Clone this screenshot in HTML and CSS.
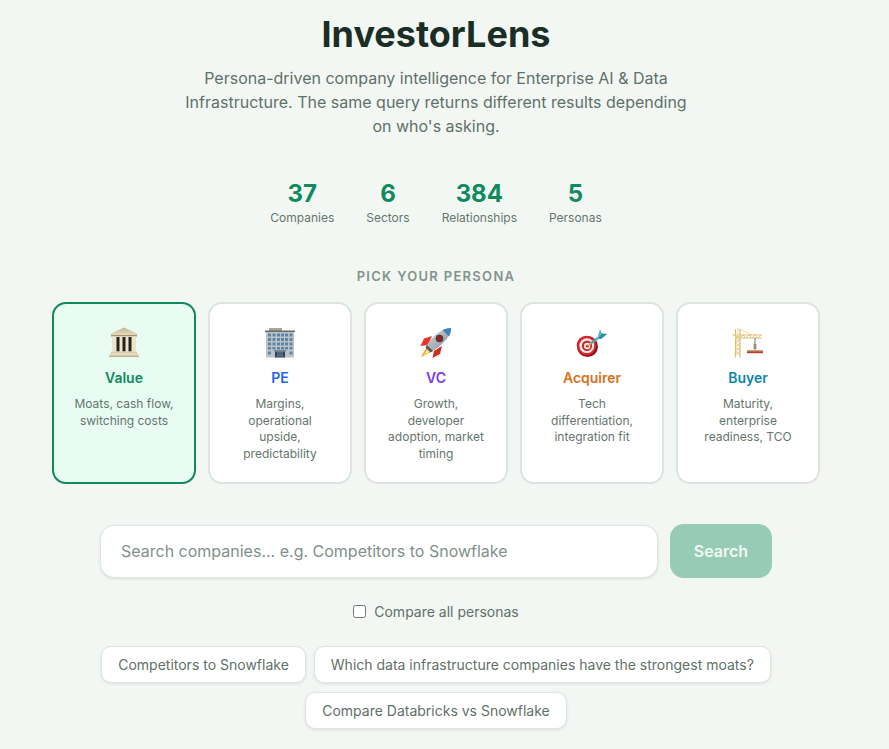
FILE: index.html
```html
<!DOCTYPE html>
<html lang="en">
<head>
  <meta charset="UTF-8">
  <title>InvestorLens</title>
  <link rel="stylesheet" href="styles.css">
</head>
<body>

<div class="page">
  <h1 class="title">InvestorLens</h1>
  <p class="tagline">Persona-driven company intelligence for Enterprise AI &amp; Data Infrastructure. The same query returns different results depending on who's asking.</p>

  <div class="stats">
    <div class="stat"><div class="stat-num">37</div><div class="stat-label">Companies</div></div>
    <div class="stat"><div class="stat-num">6</div><div class="stat-label">Sectors</div></div>
    <div class="stat"><div class="stat-num">384</div><div class="stat-label">Relationships</div></div>
    <div class="stat"><div class="stat-num">5</div><div class="stat-label">Personas</div></div>
  </div>

  <div class="pick-label">PICK YOUR PERSONA</div>

  <div class="personas">
    <div class="persona selected">
      <svg class="persona-icon" viewBox="0 0 32 32">
        <defs>
          <linearGradient id="stone" x1="0" y1="0" x2="0" y2="1">
            <stop offset="0" stop-color="#c4b48e"/>
            <stop offset="1" stop-color="#e6dcc0"/>
          </linearGradient>
        </defs>
        <path d="M16 0.5 L29 6.5 L29 8 L3 8 L3 6.5 Z" fill="url(#stone)"/>
        <rect x="3" y="8" width="26" height="1.5" fill="#a39470"/>
        <rect x="4" y="9.5" width="24" height="15" fill="#ece4cd"/>
        <rect x="8.5" y="10" width="3" height="14.5" fill="#26221d"/>
        <rect x="14.5" y="10" width="3" height="14.5" fill="#26221d"/>
        <rect x="20.5" y="10" width="3" height="14.5" fill="#26221d"/>
        <rect x="3" y="24.5" width="26" height="2" fill="#d8cba8"/>
        <rect x="2" y="26.5" width="28" height="2" fill="#e4d9bb"/>
        <rect x="1" y="28.5" width="30" height="1.5" fill="#bfae86"/>
      </svg>
      <div class="persona-name value">Value</div>
      <div class="persona-desc">Moats, cash flow, switching costs</div>
    </div>

    <div class="persona">
      <svg class="persona-icon" viewBox="0 0 32 32">
        <rect x="5" y="1" width="13" height="3" fill="#aaa49c"/>
        <rect x="1" y="3.5" width="30" height="1.5" fill="#6f675e"/>
        <rect x="2" y="5" width="28" height="25.5" fill="#bcc4c8"/>
        <g fill="#5d86a6">
          <rect x="4" y="6.5" width="3" height="3"/><rect x="8.5" y="6.5" width="3" height="3"/><rect x="13" y="6.5" width="3" height="3"/><rect x="17" y="6.5" width="3" height="3"/><rect x="21" y="6.5" width="3" height="3"/><rect x="25.5" y="6.5" width="3" height="3"/>
          <rect x="4" y="11" width="3" height="3"/><rect x="8.5" y="11" width="3" height="3"/><rect x="13" y="11" width="3" height="3"/><rect x="17" y="11" width="3" height="3"/><rect x="21" y="11" width="3" height="3"/><rect x="25.5" y="11" width="3" height="3"/>
          <rect x="4" y="15.5" width="3" height="3"/><rect x="8.5" y="15.5" width="3" height="3"/><rect x="13" y="15.5" width="3" height="3"/><rect x="17" y="15.5" width="3" height="3"/><rect x="21" y="15.5" width="3" height="3"/><rect x="25.5" y="15.5" width="3" height="3"/>
          <rect x="4" y="20" width="3" height="2.5"/><rect x="8.5" y="20" width="3" height="2.5"/><rect x="13" y="20" width="3" height="2.5"/><rect x="17" y="20" width="3" height="2.5"/><rect x="21" y="20" width="3" height="2.5"/><rect x="25.5" y="20" width="3" height="2.5"/>
          <rect x="4" y="24.5" width="3" height="3"/><rect x="25.5" y="24.5" width="3" height="3"/>
        </g>
        <rect x="10" y="23" width="12" height="1.5" fill="#7d8a92"/>
        <rect x="11" y="24.5" width="10" height="6" fill="#2c4453"/>
        <rect x="13.5" y="24.5" width="0.8" height="6" fill="#8fa2ae"/>
        <rect x="15.6" y="24.5" width="0.8" height="6" fill="#8fa2ae"/>
        <rect x="17.7" y="24.5" width="0.8" height="6" fill="#8fa2ae"/>
      </svg>
      <div class="persona-name pe">PE</div>
      <div class="persona-desc">Margins, operational upside, predictability</div>
    </div>

    <div class="persona">
      <svg class="persona-icon" viewBox="0 0 32 32">
        <defs>
          <linearGradient id="hull" x1="0" y1="0" x2="1" y2="1">
            <stop offset="0" stop-color="#d3d8de"/>
            <stop offset="1" stop-color="#8a8f98"/>
          </linearGradient>
        </defs>
        <path d="M8 18 L1 30 L13 24 Z" fill="#f59a23"/>
        <path d="M7.5 22 L3.5 28 L10 25 Z" fill="#ffe680"/>
        <path d="M12 9 L4 11.5 L0.5 19 L8 18 Z" fill="#e8352a"/>
        <path d="M22 19 L20 27 L12.5 31 L14 24 Z" fill="#d22a20"/>
        <path d="M31 1 C24 1 15 6 7 18 L13 24 C25 16 31 8 31 1 Z" fill="url(#hull)"/>
        <path d="M31 1 C28 1 25 1.8 22.5 3 L29 9.5 C30.3 7 31 4 31 1 Z" fill="#3f82c4"/>
        <circle cx="19.5" cy="11.5" r="3.8" fill="#4a3c3c"/>
        <circle cx="19.5" cy="11.5" r="2.4" fill="#a3201a"/>
        <path d="M7 18 L13 24 L10.5 25.5 L5.5 20.5 Z" fill="#4f5a66"/>
      </svg>
      <div class="persona-name vc">VC</div>
      <div class="persona-desc">Growth, developer adoption, market timing</div>
    </div>

    <div class="persona">
      <svg class="persona-icon" viewBox="0 0 32 32">
        <circle cx="11.5" cy="19.5" r="10.5" fill="#8f1417"/>
        <circle cx="10.5" cy="18.5" r="9.8" fill="#d4262b"/>
        <circle cx="10.8" cy="18.7" r="7.4" fill="#f7f1ee"/>
        <circle cx="11" cy="18.8" r="5.2" fill="#cf2429"/>
        <circle cx="11.2" cy="19" r="3.2" fill="#f7f1ee"/>
        <circle cx="11.4" cy="19" r="1.6" fill="#cf2429"/>
        <path d="M11.5 19 L15 16" stroke="#e8c24a" stroke-width="1.4"/>
        <path d="M14.5 16.5 L22 11" stroke="#4fa7bb" stroke-width="2.4"/>
        <path d="M21 11.5 L24 2 L26 6.5 L31 7 L25 12 Z" fill="#58bccd"/>
        <path d="M22 11.5 L26 6.5 L31 7 L25 12 Z" fill="#358da3"/>
      </svg>
      <div class="persona-name acquirer">Acquirer</div>
      <div class="persona-desc">Tech differentiation, integration fit</div>
    </div>

    <div class="persona">
      <svg class="persona-icon" viewBox="0 0 32 32">
        <g stroke="#dfbd70" fill="none">
          <path d="M3.5 2 V30.5 M8 2 V30.5" stroke-width="1.2"/>
          <path d="M3.5 12 L8 16 L3.5 20 L8 24 L3.5 28 M8 12 L3.5 16 L8 20 L3.5 24 L8 28" stroke-width="0.8"/>
          <path d="M0.5 8 H30 M8 11 H30" stroke-width="1.1"/>
          <path d="M8 11 L11 8 L14 11 L17 8 L20 11 L23 8 L26 11 L29 8" stroke-width="0.8"/>
          <path d="M5.8 0.5 V8 M5.8 1.5 L20 8" stroke-width="0.6"/>
        </g>
        <rect x="3" y="9" width="5.5" height="3" fill="#e9d18d"/>
        <path d="M23 11 V23" stroke="#6b6258" stroke-width="0.9"/>
        <rect x="21.6" y="17" width="2.8" height="5" fill="#9a8c6c"/>
        <rect x="15" y="23" width="16" height="1.2" fill="#c9a37f"/>
        <rect x="15" y="24.2" width="16" height="2" fill="#b93f2b"/>
      </svg>
      <div class="persona-name buyer">Buyer</div>
      <div class="persona-desc">Maturity, enterprise readiness, TCO</div>
    </div>
  </div>

  <div class="search-row">
    <input class="search-input" placeholder="Search companies... e.g. Competitors to Snowflake">
    <button class="search-btn">Search</button>
  </div>

  <label class="compare">
    <input type="checkbox">
    Compare all personas
  </label>

  <div class="chips">
    <button class="chip">Competitors to Snowflake</button>
    <button class="chip">Which data infrastructure companies have the strongest moats?</button>
    <button class="chip">Compare Databricks vs Snowflake</button>
  </div>
</div>

</body>
</html>
```

FILE: styles.css
```css
html, body {
  height: 749px;
  overflow: hidden;
}

body {
  margin: 0;
  padding-right: 17px;
  background-color: #f2f7f4;
  color: #5f7168;
  font-family: Inter, "Liberation Sans", sans-serif;
}

.page {
  width: 768px;
  margin: 0 auto;
  padding-top: 12px;
}

.title {
  margin: 0;
  font-size: 36px;
  line-height: 44px;
  font-weight: 700;
  color: #1a2e25;
  text-align: center;
}

.tagline {
  width: 520px;
  margin: 10px auto 0;
  font-size: 16px;
  line-height: 24px;
  color: #5f7168;
  text-align: center;
}

.stats {
  display: flex;
  justify-content: center;
  gap: 32px;
  margin-top: 41px;
}

.stat {
  text-align: center;
}

.stat-num {
  font-size: 24px;
  line-height: 29px;
  font-weight: 700;
  color: #0f8a5f;
}

.stat-label {
  margin-top: 2px;
  font-size: 12px;
  line-height: 15px;
  color: #64766d;
}

.pick-label {
  margin-top: 43px;
  font-size: 13px;
  line-height: 16px;
  font-weight: 600;
  letter-spacing: 1.3px;
  color: #82938b;
  text-align: center;
}

.personas {
  display: grid;
  grid-template-columns: repeat(5, 144px);
  gap: 12px;
  margin-top: 18px;
}

.persona {
  height: 182px;
  box-sizing: border-box;
  padding: 23px 20px 16px;
  background-color: #fff;
  border: 2px solid #dce5e0;
  border-radius: 14px;
  text-align: center;
}

.persona.selected {
  background-color: #e8fcf2;
  border-color: #0f8a5f;
}

.persona-icon {
  display: block;
  width: 32px;
  height: 32px;
  margin: 0 auto;
}

.persona-name {
  margin-top: 9px;
  font-size: 14px;
  line-height: 20px;
  font-weight: 600;
}

.value { color: #0f8a5f; }
.pe { color: #2563eb; }
.vc { color: #7c3aed; }
.acquirer { color: #d9701a; }
.buyer { color: #0e86a8; }

.persona-desc {
  margin-top: 8px;
  font-size: 12px;
  line-height: 16.5px;
  color: #64766d;
}

.search-row {
  display: flex;
  align-items: center;
  gap: 12px;
  width: 672px;
  margin: 40px auto 0;
}

.search-input {
  flex: 1;
  min-width: 0;
  height: 53px;
  box-sizing: border-box;
  padding: 0 20px;
  border: 1px solid #dce5e0;
  border-radius: 14px;
  background-color: #fff;
  box-shadow: 0 1px 3px rgba(0, 0, 0, 0.1);
  font-family: inherit;
  font-size: 16px;
  outline: none;
}

.search-input::placeholder {
  color: #7f9189;
}

.search-btn {
  width: 102px;
  height: 54px;
  border: none;
  border-radius: 14px;
  background-color: #96ccb6;
  color: #f2f7f4;
  font-family: inherit;
  font-size: 16px;
  font-weight: 600;
}

.compare {
  display: flex;
  align-items: center;
  justify-content: center;
  gap: 8px;
  margin-top: 25px;
  font-size: 14px;
  line-height: 17px;
  color: #5f7168;
}

.compare input {
  width: 13px;
  height: 13px;
  margin: 0;
}

.chips {
  display: flex;
  flex-wrap: wrap;
  justify-content: center;
  gap: 9px 8px;
  width: 672px;
  margin: 26px auto 0;
}

.chip {
  height: 37px;
  padding: 0 16px;
  border: 1px solid #dce5e0;
  border-radius: 10px;
  background-color: #fff;
  box-shadow: 0 1px 3px rgba(0, 0, 0, 0.1);
  color: #5f7168;
  font-family: inherit;
  font-size: 14px;
}
```
